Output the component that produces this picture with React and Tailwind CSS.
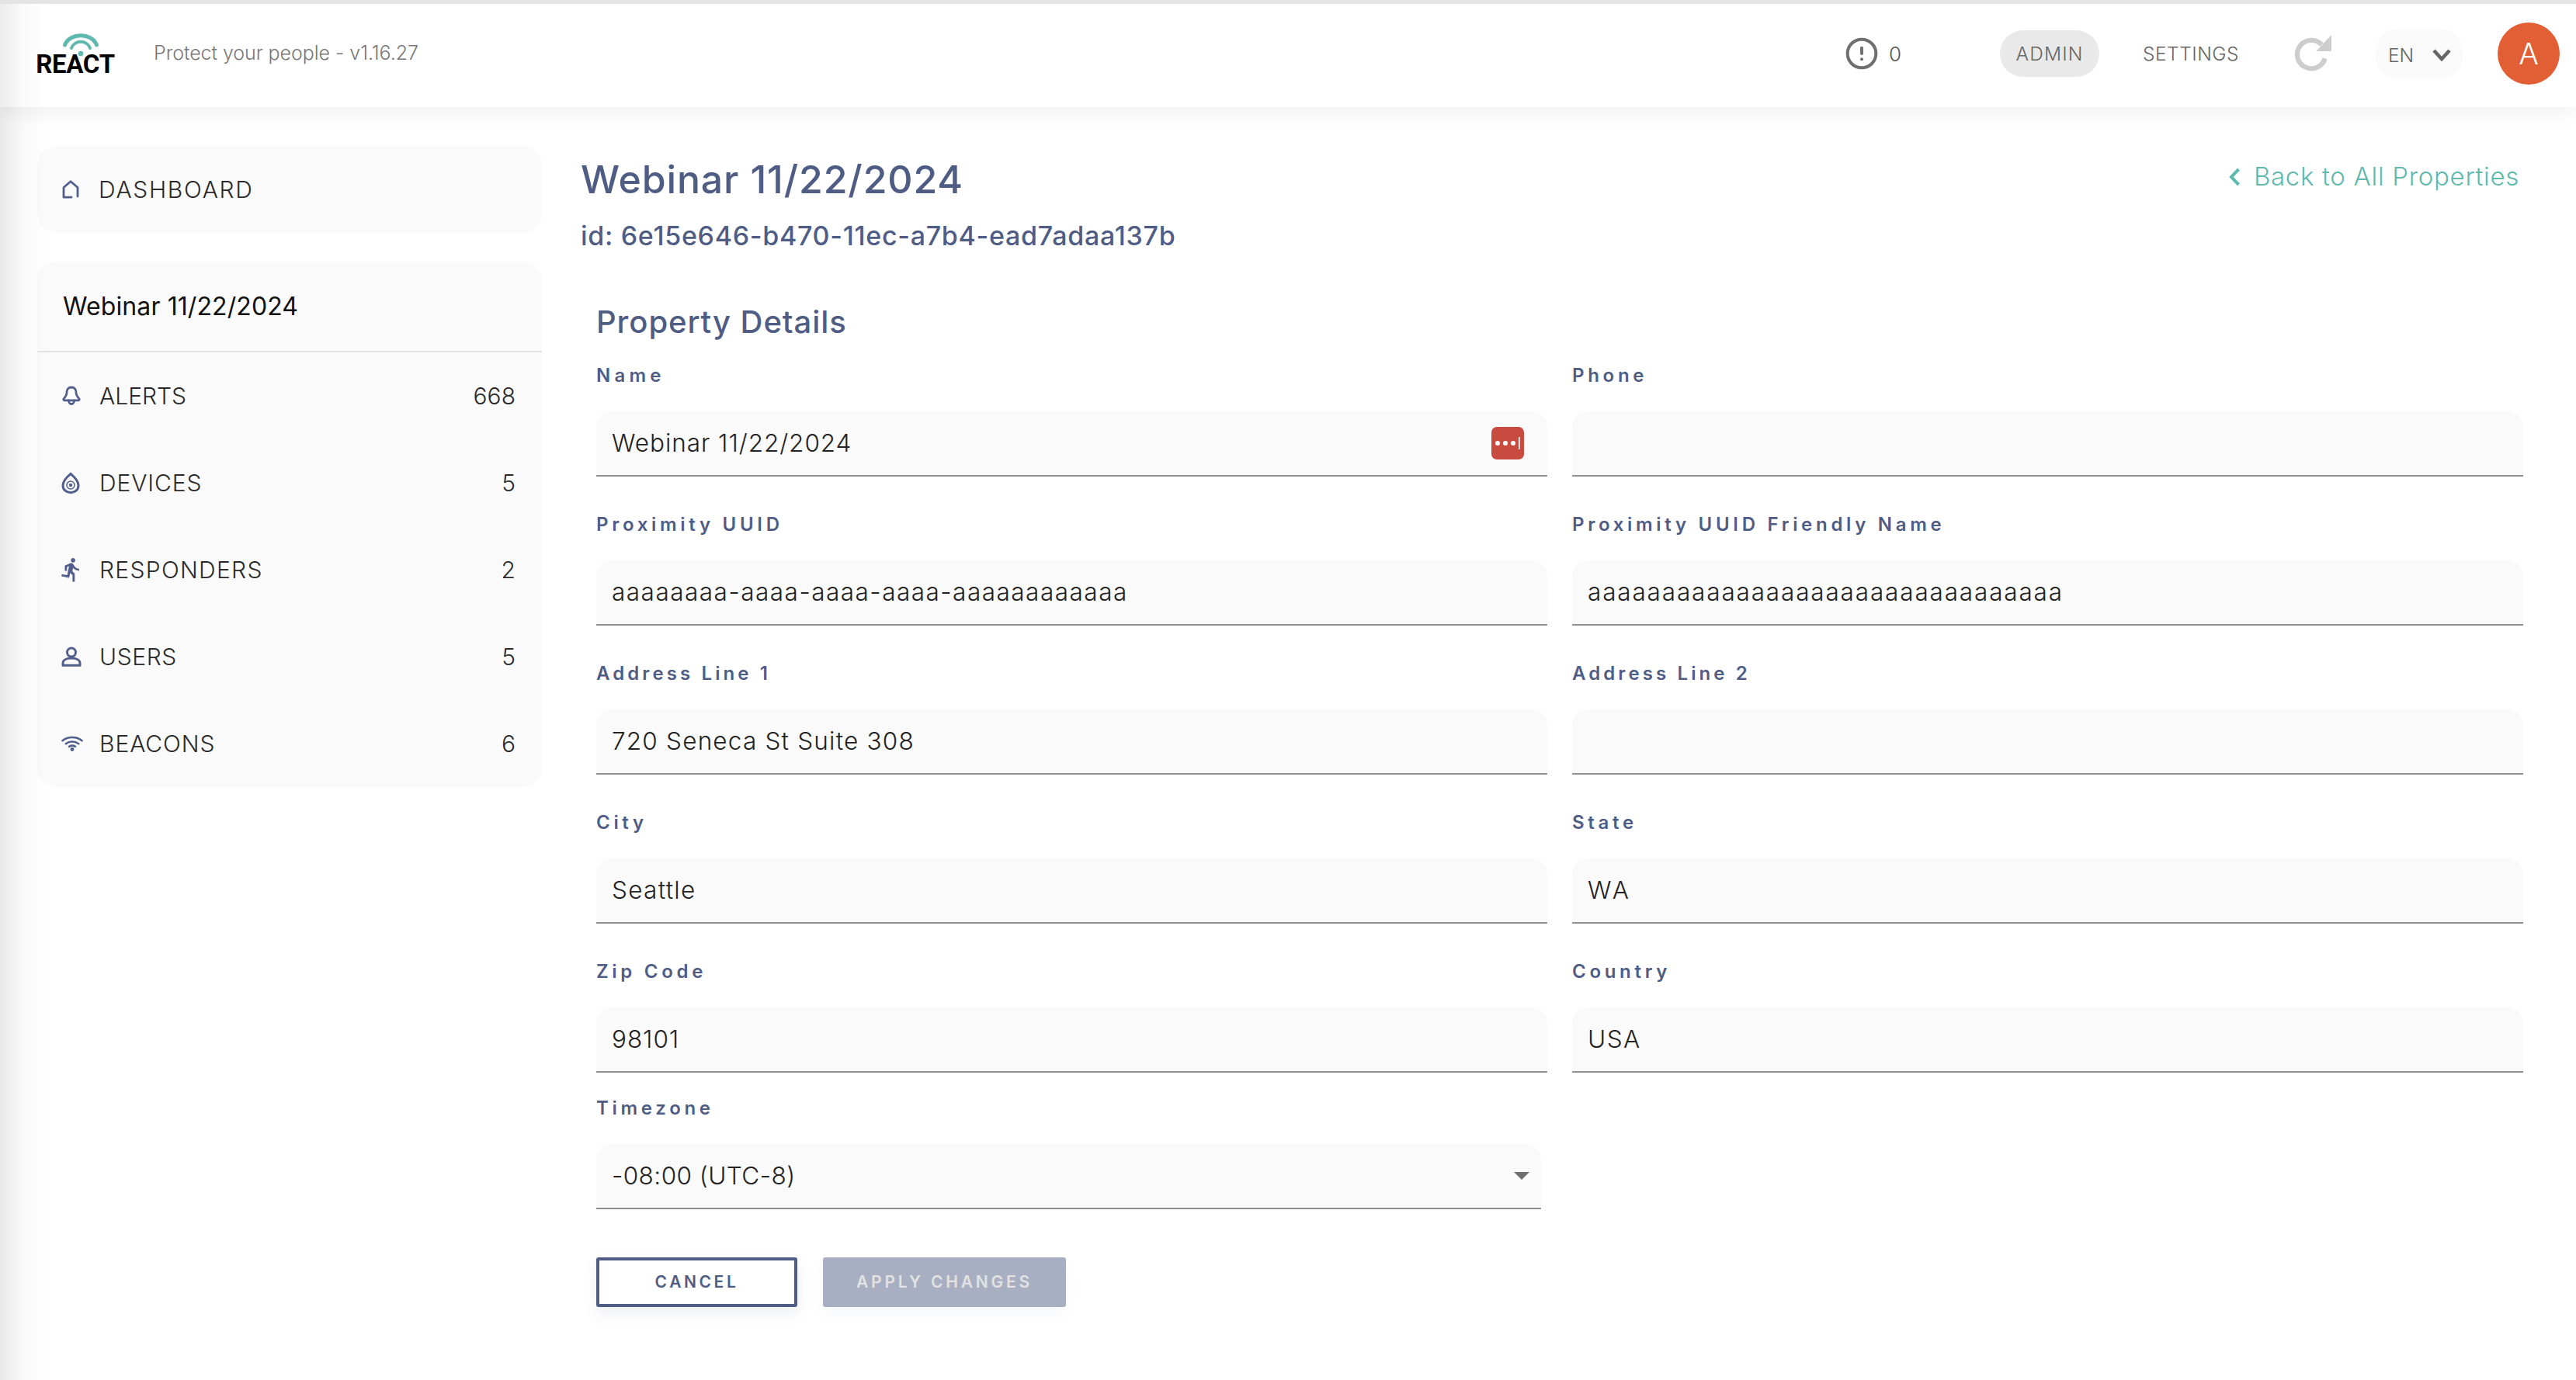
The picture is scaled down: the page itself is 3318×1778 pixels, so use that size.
import React from "react";
import { CircleAlert } from "lucide-react";
import { MdOutlineDirectionsRun } from "react-icons/md";

const F = "font-['Inter','Noto_Sans',sans-serif]";

const HomeIcon = () => (
  <svg viewBox="0 0 22 24" className="w-[22px] h-[24px]" fill="none" stroke="#525f8c" strokeWidth="2.8" strokeLinejoin="round" strokeLinecap="round">
    <path d="M20 21V9.5L11 1.8 2 9.5V22.2h10" />
  </svg>
);
const BellIcon = () => (
  <svg viewBox="0 0 26 26" className="w-[26px] h-[26px]" fill="none" stroke="#525f8c" strokeWidth="2.8" strokeLinejoin="round" strokeLinecap="round">
    <path d="M13 2c-4 0-6 3-6 6.500 0 4-1.500 5.500-4 8.500-.5.8 0 1.800 1 1.800h18c1 0 1.500-1 1-1.800-2.500-3-4-4.500-4-8.500C19 5 17 2 13 2z" />
    <path d="M9.500 19c0 2.500 1.500 4.500 3.500 4.500s3.500-2 3.500-4.500" />
  </svg>
);
const EggIcon = () => (
  <svg viewBox="0 0 24 28" className="w-[24px] h-[29px]" fill="none" stroke="#525f8c" strokeWidth="3">
    <path d="M12 2c-3 2.600-10 8-10 15 0 5.500 4.500 9.200 10 9.200s10-3.700 10-9.200c0-7-7-12.400-10-15z" />
    <circle cx="12" cy="16.500" r="2.200" fill="#525f8c" stroke="none" />
    <circle cx="12" cy="16.500" r="5" strokeWidth="1.500" />
  </svg>
);
const UserIcon = () => (
  <svg viewBox="0 0 26 26" className="w-[26px] h-[26px]" fill="none" stroke="#525f8c" strokeWidth="3" strokeLinejoin="round">
    <circle cx="13" cy="7.500" r="5.500" />
    <path d="M2 24.200v-2.700c0-4 4.500-6.500 11-6.500s11 2.500 11 6.500v2.700z" />
  </svg>
);
const WifiIcon = () => (
  <svg viewBox="0 0 28 20" className="w-[28px] h-[20px]" fill="none" stroke="#525f8c" strokeWidth="2.600" strokeLinecap="round">
    <path d="M1.500 6.200C8.500 .6 19.500 .6 26.500 6.200" />
    <path d="M5.800 10.200c4.800-3.600 11.600-3.600 16.400 0" />
    <path d="M10 13.800c2.500-1.500 5.500-1.500 8 0" />
    <circle cx="14" cy="17.500" r="2.400" fill="#525f8c" stroke="none" />
  </svg>
);
const RunIcon = () => <MdOutlineDirectionsRun className="w-[34px] h-[34px] -ml-[4px] -mr-[4px] text-[#525f8c]" />;

const Logo = () => (
  <div className="w-[100px] flex flex-col items-center">
    <svg viewBox="0 0 46 30" className="w-[46px] h-[30px] ml-[14px] -mb-[3px]" fill="none" stroke="#5fb9ad" strokeLinecap="round">
      <path d="M2.500 15C9-1.500 37-1.500 43.500 15" strokeWidth="5" />
      <path d="M11 19C15 8 31 8 35 19" strokeWidth="4" />
      <circle cx="23" cy="26" r="3.300" fill="#5fb9ad" stroke="none" />
    </svg>
    <span className="font-['Roboto',sans-serif] font-bold text-[33px] leading-[26px] text-black tracking-[-0.3px]">REACT</span>
  </div>
);

const Field = ({ label, value, icon, track = "tracking-[0.95px]", ltrack = "tracking-[4.7px]" }) => (
  <div className="flex flex-col">
    <div className={`h-[34px] mb-[29px] flex items-center text-[24px] font-semibold text-[#4f5d85] leading-none ${ltrack}`}>{label}</div>
    <div className="h-[84px] bg-[#fafafa] rounded-t-[20px] border-b-2 border-[#8f8f8f] flex items-center justify-between pl-[20px] pr-[30px]">
      <span className={`text-[31.500px] font-light text-[#222] leading-none ${track}`}>{value}</span>
      {icon}
    </div>
  </div>
);

const PassIcon = () => (
  <svg viewBox="0 0 42 42" className="w-[42px] h-[42px]">
    <rect width="42" height="42" rx="7" fill="#c84b3f" />
    <circle cx="8" cy="21" r="3" fill="#fff" />
    <circle cx="18" cy="21" r="3" fill="#fff" />
    <circle cx="28" cy="21" r="3" fill="#fff" />
    <rect x="35" y="13" width="1.600" height="16" fill="#fff" />
  </svg>
);

const rows = [
  ["ALERTS", "668", <BellIcon />, "tracking-[0px]"],
  ["DEVICES", "5", <EggIcon />, "tracking-[0.9px]"],
  ["RESPONDERS", "2", <RunIcon />, "tracking-[1.3px]"],
  ["USERS", "5", <UserIcon />, "tracking-[0.6px]"],
  ["BEACONS", "6", <WifiIcon />, "tracking-[0.9px]"],
];

export default function App() {
  return (
    <div className={`${F} relative w-[3318px] h-[1778px] overflow-hidden bg-[linear-gradient(90deg,#e9e9e9_0px,#f8f8f8_28px,#ffffff_60px)]`}>
      <header className="relative z-10 h-[138px] border-t-[5px] border-[#e4e4e4] flex items-center shadow-[0_8px_22px_rgba(0,0,0,0.06)] bg-[linear-gradient(90deg,#ececec_0px,#fafafa_28px,#ffffff_60px)]">
        <div className="ml-[47px] -mt-[4px]"><Logo /></div>
        <div className="ml-[51px] -mt-[5px] text-[25px] font-light text-[#777] tracking-[-0.05px]">Protect your people - v1.16.27</div>
        <div className="ml-auto flex items-center -mt-[5px]">
          <CircleAlert className="w-[44px] h-[44px] text-[#6f6f6f]" strokeWidth={2.200} />
          <span className="ml-[13px] text-[26px] font-light text-[#555] w-[14px]">0</span>
          <div className="ml-[129px] w-[128px] h-[60px] rounded-[30px] bg-[#e9e9e9] flex items-center justify-center text-[24.500px] font-light text-[#666] tracking-[1.200px]">ADMIN</div>
          <div className="ml-[56px] text-[24.500px] font-light text-[#666] tracking-[0.5px]">SETTINGS</div>
          <svg viewBox="0 0 48 48" className="ml-[70px] w-[50px] h-[50px]" fill="none">
            <path d="M39 30a17.500 17.500 0 1 1-4-17" stroke="#cdcdcd" strokeWidth="6" />
            <path d="M47 1v20H28z" fill="#cdcdcd" />
          </svg>
          <div className="ml-[56px] w-[112px] h-[64px] rounded-[28px] bg-[#fafafa] flex items-center pl-[16px]">
            <span className="text-[24.500px] font-light text-[#666] mt-[4px]">EN</span>
            <svg viewBox="0 0 24 16" className="ml-[24px] mt-[4px] w-[24px] h-[16px]" fill="none" stroke="#666" strokeWidth="4.500">
              <path d="M2 2l10 11L22 2" />
            </svg>
          </div>
          <div className="ml-[45px] mr-[21px] w-[80px] h-[80px] rounded-full bg-[#e25f35] text-white flex items-center justify-center text-[38px] font-light">A</div>
        </div>
      </header>

      <div className="flex">
        <aside className="ml-[48px] w-[650px] mt-[50px] shrink-0 flex flex-col gap-[37px]">
          <div className="h-[112px] rounded-[24px] bg-[#00000005] flex items-center pl-[32px]">
            <HomeIcon />
            <span className="ml-[25px] text-[30px] font-light text-[#2a2a2a] tracking-[1.7px]">DASHBOARD</span>
          </div>
          <div className="rounded-[24px] bg-[#00000005] flex flex-col">
            <div className="h-[117px] border-b-2 border-[#e2e2e2] flex items-center pl-[33px] text-[32px] text-[#111] font-normal tracking-[0.1px]">Webinar 11/22/2024</div>
            <div className="flex flex-col">
              {rows.map(([t, n, ic, tr]) => (
                <div key={t} className="h-[112px] flex items-center pr-[34px]">
                  <div className="w-[80px] pl-[31px] flex items-center">{ic}</div>
                  <span className={`text-[30px] font-light text-[#2a2a2a] ${tr}`}>{t}</span>
                  <span className="ml-auto text-[30px] font-light text-[#2a2a2a]">{n}</span>
                </div>
              ))}
            </div>
          </div>
        </aside>

        <main className="ml-[50px] flex-1 pr-[68px] pt-[62px] flex flex-col">
          <div className="flex justify-between">
            <div>
              <h1 className="text-[50px] leading-[62px] font-medium text-[#4f5d85] tracking-[0.850px]">Webinar 11/22/2024</h1>
              <div className="mt-[20px] text-[34px] leading-[44px] font-medium text-[#4f5d85] tracking-[0.700px]">id: 6e15e646-b470-11ec-a7b4-ead7adaa137b</div>
            </div>
            <a className="flex items-center text-[#5fb9ad] text-[33px] font-light h-[60px] mr-[5px] tracking-[0.7px] -mt-[2px]">
              <svg viewBox="0 0 16 24" className="w-[16px] h-[24px] mr-[17px]" fill="none" stroke="#5fb9ad" strokeWidth="4">
                <path d="M13.500 2L4 12l9.500 10" />
              </svg>
              Back to All Properties
            </a>
          </div>
          <div className="pl-[20px]">
            <h2 className="mt-[65px] mb-[28px] text-[40px] leading-[48px] font-medium text-[#4f5d85] tracking-[0.950px]">Property Details</h2>
            <div className="grid grid-cols-2 gap-x-[32px] gap-y-[45px]">
              <Field label="Name" value="Webinar 11/22/2024" icon={<PassIcon />} ltrack="tracking-[5.200px]" />
              <Field label="Phone" value="" />
              <Field label="Proximity UUID" value="aaaaaaaa-aaaa-aaaa-aaaa-aaaaaaaaaaaa" track="tracking-[1.500px]" />
              <Field label="Proximity UUID Friendly Name" value="aaaaaaaaaaaaaaaaaaaaaaaaaaaaaaaa" track="tracking-[1.850px]" />
              <Field label="Address Line 1" value="720 Seneca St Suite 308" track="tracking-[1.200px]" ltrack="tracking-[4.100px]" />
              <Field label="Address Line 2" value="" ltrack="tracking-[4.100px]" />
              <Field label="City" value="Seattle" track="tracking-[1.300px]" />
              <Field label="State" value="WA" track="tracking-[3px]" />
              <Field label="Zip Code" value="98101" />
              <Field label="Country" value="USA" track="tracking-[1.500px]" />
            </div>
            <div className="mt-[29px] w-[1217px]">
              <Field
                label="Timezone"
                value="-08:00 (UTC-8)"
                track="tracking-[0.450px]"
                icon={<span className="w-0 h-0 border-x-[10px] border-x-transparent border-t-[10px] border-t-[#6f6f6f] -mr-[15px]" />}
              />
            </div>
            <div className="mt-[62px] flex gap-[33px]">
              <button className="w-[259px] h-[64px] border-[4px] border-[#4f5d85] rounded-[3px] bg-white text-[#4f5d85] text-[21px] font-semibold tracking-[3.600px] shadow-[0_8px_18px_rgba(79,93,133,0.10)]">CANCEL</button>
              <button className="w-[313px] h-[64px] rounded-[3px] bg-[#a9afc3] text-[#e2e2e2] text-[21px] font-semibold tracking-[3.800px] shadow-[0_8px_18px_rgba(79,93,133,0.05)]">APPLY CHANGES</button>
            </div>
          </div>
        </main>
      </div>
    </div>
  );
}
